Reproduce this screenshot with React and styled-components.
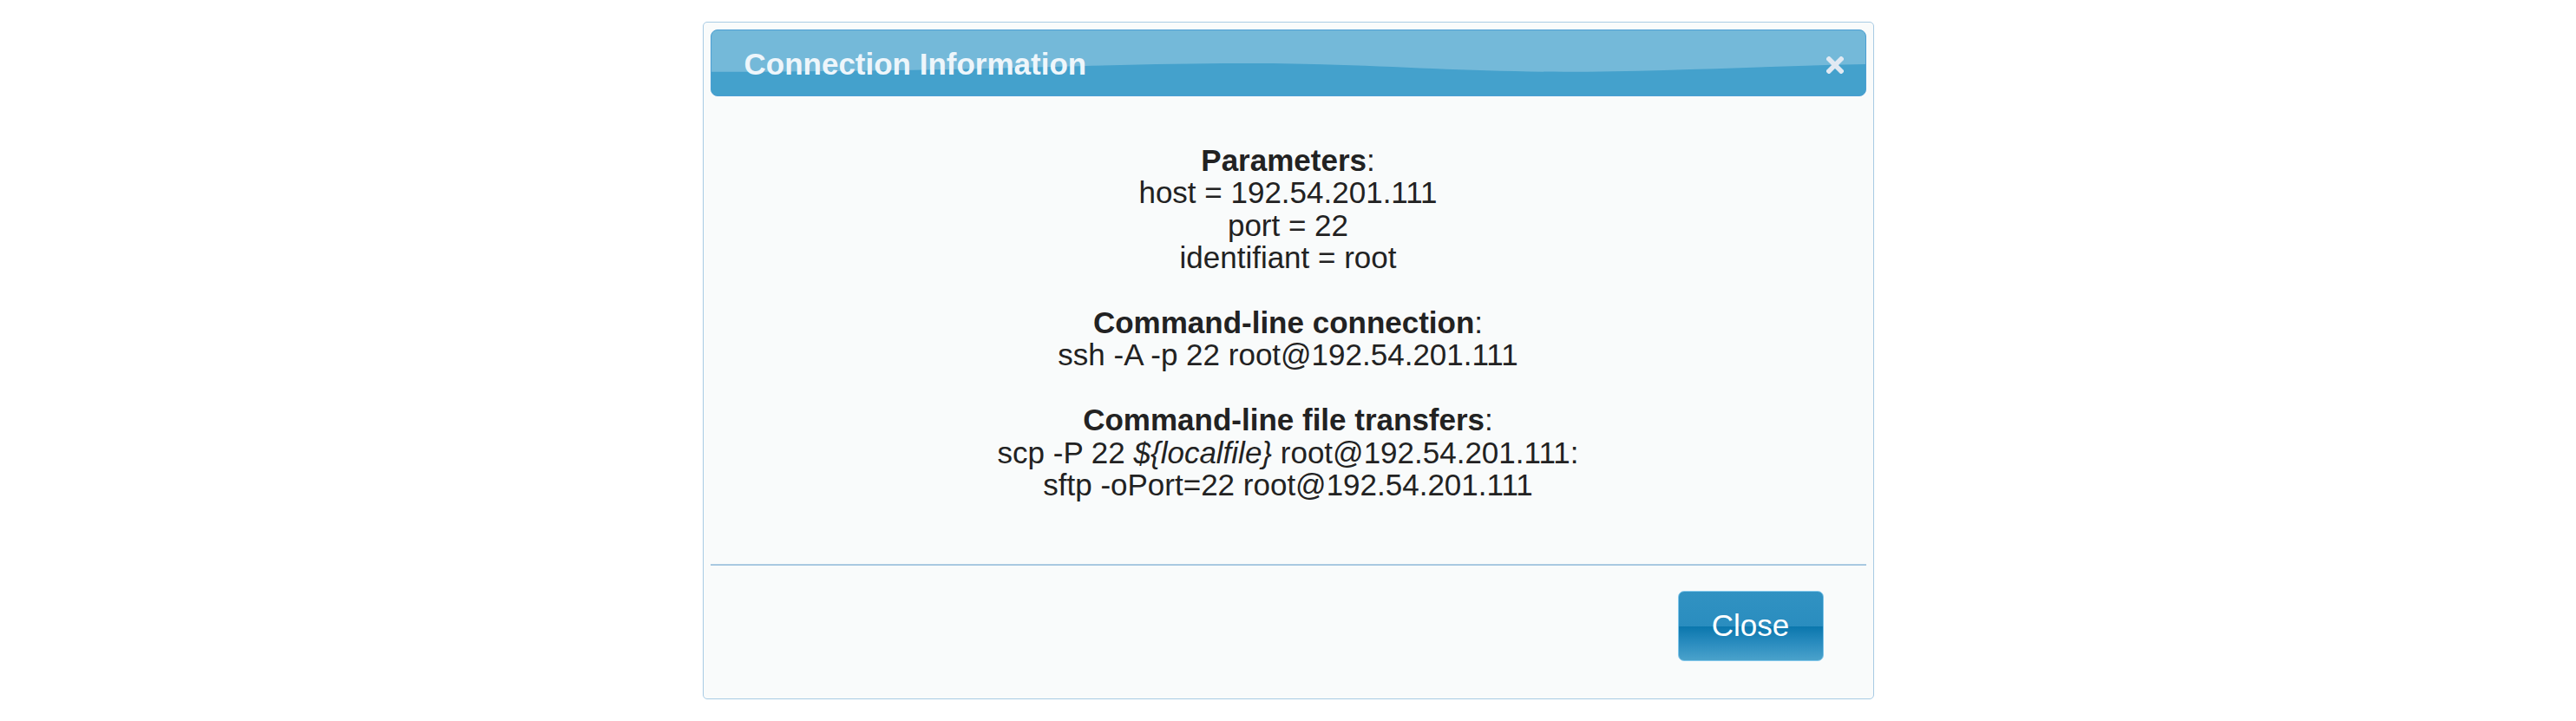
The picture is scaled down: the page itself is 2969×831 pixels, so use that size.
import React from 'react';
import styled, { createGlobalStyle } from 'styled-components';

const GlobalStyle = createGlobalStyle`
  body {
    margin: 0;
    background: #ffffff;
    font-family: "Liberation Sans", Arial, sans-serif;
  }
`;

const Page = styled.div`
  display: flex;
  justify-content: center;
  padding-top: 25px;
`;

const Dialog = styled.div`
  width: 1350px;
  box-sizing: border-box;
  border: 1px solid #a8cbe4;
  border-radius: 5px;
  background: #f9fbfb;
  padding: 8px 8px 8px 8px;
  display: flex;
  flex-direction: column;
`;

const TitleBar = styled.div`
  position: relative;
  height: 77px;
  box-sizing: border-box;
  border: 1px solid #4c9fd3;
  border-radius: 8px;
  background: #44a1cc;
  overflow: hidden;
  display: flex;
  align-items: center;
  justify-content: space-between;
  padding: 4px 25px 0 38px;
`;

const Gloss = styled.svg`
  position: absolute;
  left: 0;
  top: 0;
  width: 100%;
  height: 100%;
`;

const Title = styled.span`
  position: relative;
  color: #eef6fb;
  font-size: 35px;
  font-weight: bold;
  line-height: 40px;
  margin-top: -1px;
`;

const CloseIcon = styled.svg`
  position: relative;
  width: 20px;
  height: 20px;
  margin-top: 1px;
`;

const Content = styled.div`
  padding: 55px 20px 73px;
  text-align: center;
  color: #222222;
  font-size: 35px;
  line-height: 37.4px;
`;

const Line = styled.div`
  min-height: 37.4px;
`;

const Divider = styled.div`
  height: 2px;
  background: #a9c9e1;
`;

const Footer = styled.div`
  display: flex;
  justify-content: flex-end;
  padding: 29px 49px 35px 0;
`;

const CloseButton = styled.button`
  width: 168px;
  height: 81px;
  border: 1px solid #80c6ea;
  border-radius: 7px;
  background: linear-gradient(
    to bottom,
    #3192c2 0%,
    #2a8dbf 50%,
    #0b77ad 51%,
    #2a8cbf 75%,
    #4aa2cb 100%
  );
  color: #ffffff;
  font-family: "Liberation Sans", Arial, sans-serif;
  font-size: 35px;
  padding: 0 0 2px;
  cursor: pointer;
`;

export default function App() {
  return (
    <>
      <GlobalStyle />
      <Page>
        <Dialog>
          <TitleBar>
            <Gloss viewBox="0 0 1332 77" preserveAspectRatio="none">
              <path
                d="M0 0 H1332 V40 C1250 41 1100 49 984 49 C850 49 760 39 610 39 C460 39 300 49 0 49 Z"
                fill="#74b9d9"
              />
            </Gloss>
            <Title>Connection Information</Title>
            <CloseIcon viewBox="0 0 20 20">
              <path d="M3 3 L17 17 M17 3 L3 17" stroke="#e1e9f2" strokeWidth="5.5" strokeLinecap="square" />
            </CloseIcon>
          </TitleBar>
          <Content>
            <Line><b>Parameters</b>:</Line>
            <Line>host = 192.54.201.111</Line>
            <Line>port = 22</Line>
            <Line>identifiant = root</Line>
            <Line />
            <Line><b>Command-line connection</b>:</Line>
            <Line>ssh -A -p 22 root@192.54.201.111</Line>
            <Line />
            <Line><b>Command-line file transfers</b>:</Line>
            <Line>scp -P 22 <i>{'${localfile}'}</i> root@192.54.201.111:</Line>
            <Line>sftp -oPort=22 root@192.54.201.111</Line>
          </Content>
          <Divider />
          <Footer>
            <CloseButton>Close</CloseButton>
          </Footer>
        </Dialog>
      </Page>
    </>
  );
}
